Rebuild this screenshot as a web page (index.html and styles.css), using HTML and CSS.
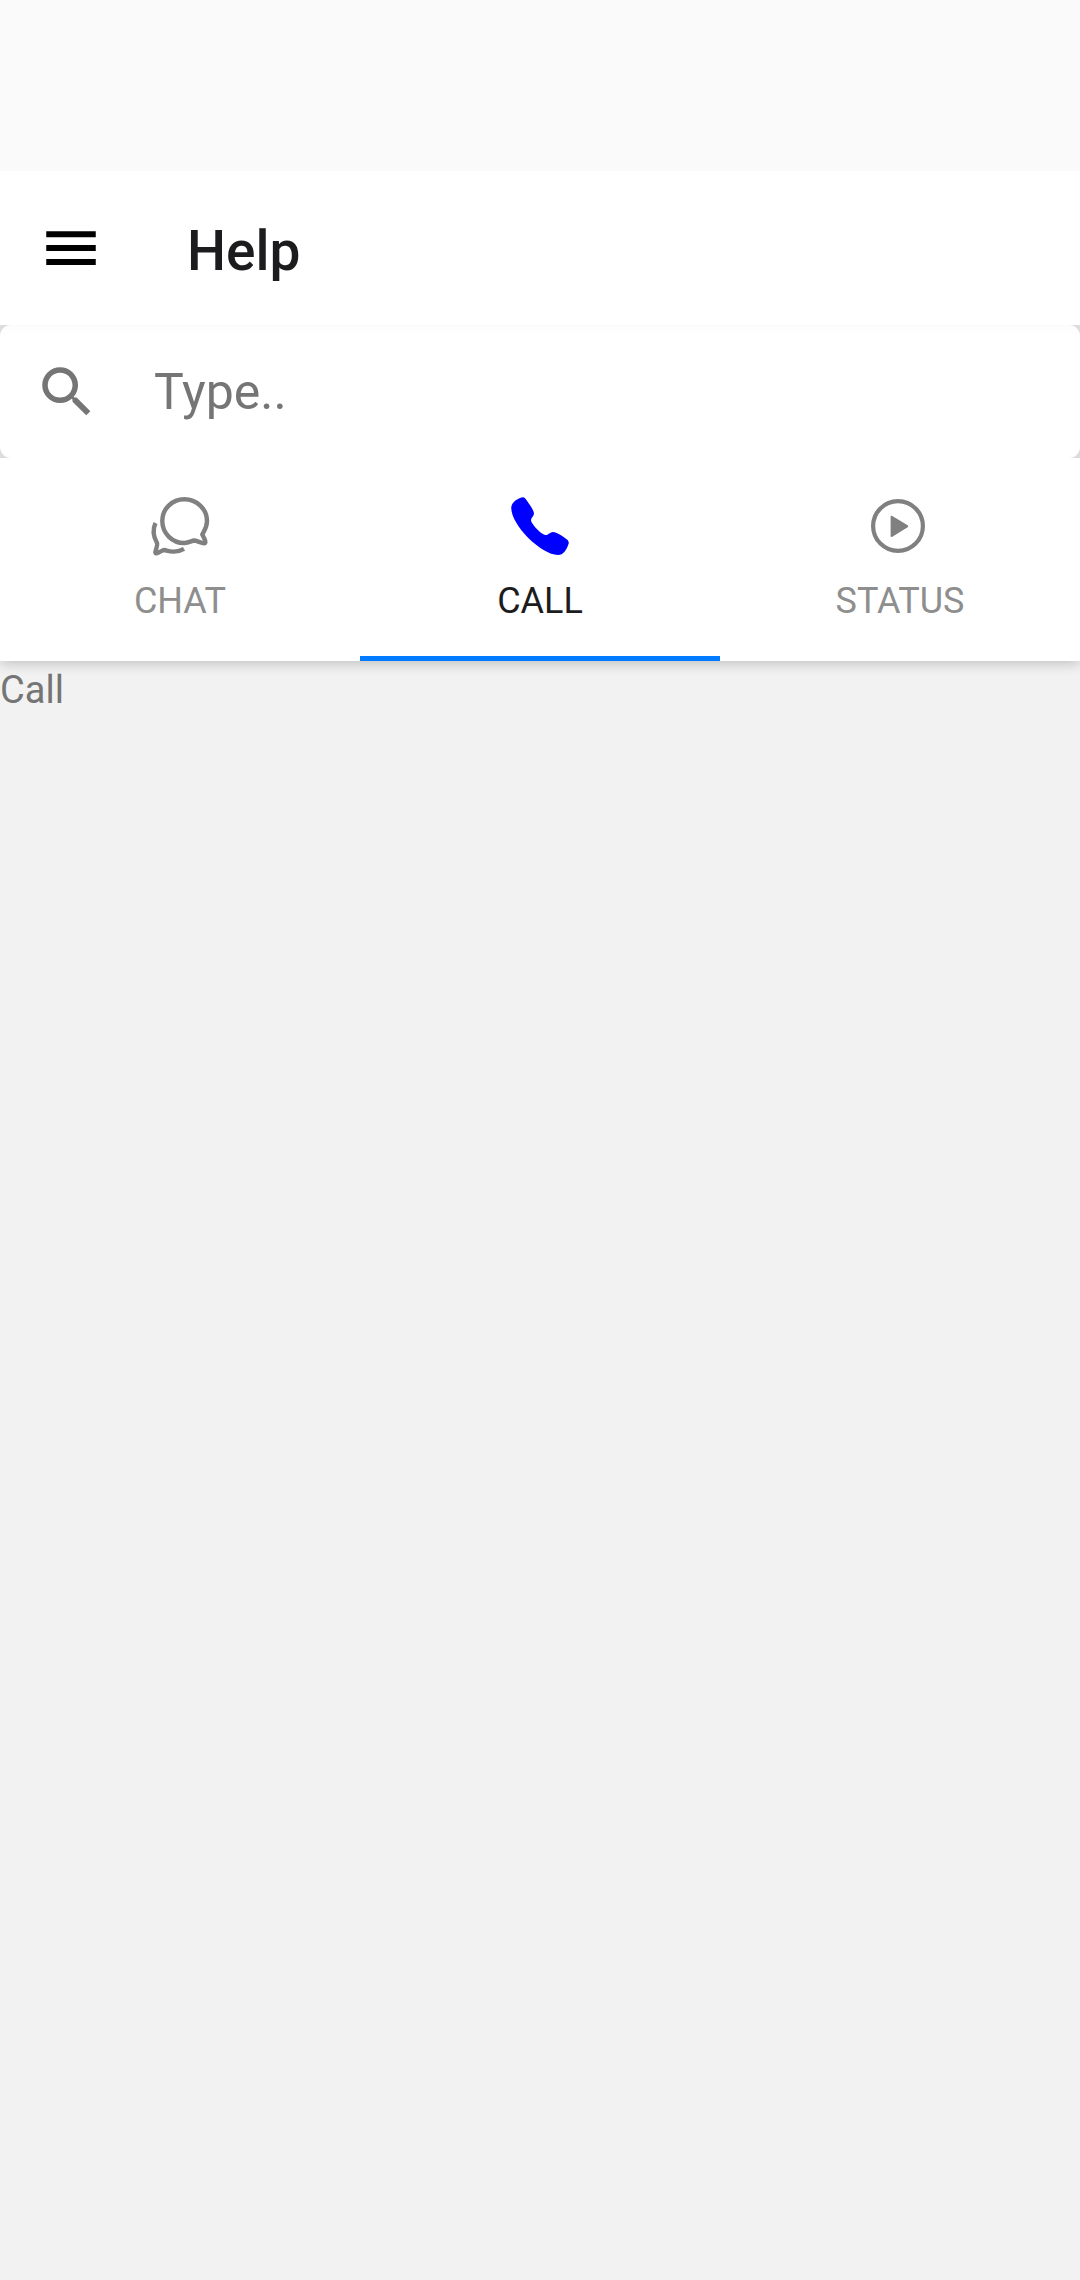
FILE: index.html
```html
<!DOCTYPE html>
<html lang="en">
<head>
<meta charset="utf-8">
<meta name="viewport" content="width=device-width, initial-scale=1">
<title>Help</title>
<link rel="stylesheet" href="styles.css">
</head>
<body>
<div class="status-bar"></div>
<header class="toolbar">
  <button class="icon-button" type="button" aria-label="Open menu">
    <svg class="icon" viewBox="0 0 24 24" fill="#000"><path d="M3 18.200h18v-2.200H3v2.200zm0-5.100h18v-2.200H3v2.200zm0-7.200v2.200h18V5.900H3z"/></svg>
  </button>
  <h1 class="title">Help</h1>
</header>
<form class="search-wrap" role="search">
  <div class="search">
    <svg class="icon" viewBox="0 0 24 24" fill="#757575" aria-hidden="true"><path d="M15.5 14h-.79l-.28-.27A6.471 6.471 0 0 0 16 9.500 6.500 6.500 0 1 0 9.500 16c1.610 0 3.090-.59 4.230-1.570l.27.28v.79l5 4.990L20.490 19l-4.990-5zm-6 0C7.010 14 5 11.990 5 9.500S7.010 5 9.500 5 14 7.010 14 9.500 11.990 14 9.500 14z"/></svg>
    <input class="search-input" type="search" placeholder="Type.." aria-label="Search">
  </div>
</form>
<nav class="tabs" role="tablist">
  <button class="tab" type="button" role="tab" aria-selected="false">
    <svg class="icon" viewBox="0 0 66 66" fill="none" stroke="#808080" stroke-width="4.400" stroke-linecap="round" stroke-linejoin="round"><path d="M55.300 41.500C57.200 37.700 60 34.500 60 28C60 15.800 49.600 6.300 37.300 6.300S15.300 15.800 15.300 28S25 50 37.300 50C41.500 50 44.500 48 47 47.500C49.500 47.500 54 50 57 50.300C58.500 50.400 58.600 49.400 58 47Z"/><path stroke-linecap="butt" d="M8.500 30C5 37.500 6.300 43.500 10 50C11 52 8.300 57.500 8.300 59.500C8.500 60.700 9.200 60.500 10.500 60C13 59 15.500 57 17.500 57C20 57.500 22.500 58.800 27 58.600C31 58.500 34 57.500 37 55.800"/></svg>
    <span class="label">CHAT</span>
  </button>
  <button class="tab tab-active" type="button" role="tab" aria-selected="true">
    <svg class="icon" viewBox="0 0 66 66" fill="#00f"><path d="M4.300 14C4.800 9 11 5 15.500 4.200C17.500 4 19 6.200 20.500 8.500C23 12 27 18 27 20.500C26.800 23.500 23.800 25 24 27.500C25 32 34.500 41.500 38.500 42C41.500 42.200 43 39 46 39C49.500 39 57 44 60 46.500C61.800 48.200 62 49.500 61.500 51C59.500 57 56.500 62 51 62C34 62 3 31 4.300 14Z"/></svg>
    <span class="label">CALL</span>
  </button>
  <button class="tab" type="button" role="tab" aria-selected="false">
    <svg class="icon" viewBox="0 0 66 66"><circle cx="31" cy="33" r="24.900" fill="none" stroke="#808080" stroke-width="4.200"/><path fill="#808080" d="M23.600 23.700C23.600 22.700 24.500 22.400 25.300 22.900L40.700 32.300Q42 33.200 40.700 34.200L25.300 43.700C24.500 44.200 23.600 43.900 23.600 43Z"/></svg>
    <span class="label">STATUS</span>
  </button>
</nav>
<main class="content" role="tabpanel"><p class="text">Call</p></main>
</body>
</html>
```
FILE: styles.css
```css
* { box-sizing: border-box; }

body {
  margin: 0;
  min-height: 100vh;
  display: flex;
  flex-direction: column;
  background: #f2f2f2;
  font-family: Roboto, sans-serif;
}

button {
  border: 0;
  padding: 0;
  background: none;
  font: inherit;
}

.icon {
  display: block;
  flex: none;
  width: 66px;
  height: 66px;
}

.status-bar {
  height: 171px;
  background: #fafafa;
}

.toolbar {
  display: flex;
  align-items: center;
  gap: 83px;
  height: 154px;
  padding: 0 38px;
  background: #fff;
}

.title {
  margin: 0;
  padding-top: 6px;
  font-size: 55px;
  line-height: 64px;
  font-weight: 500;
  color: #1c1c1e;
}

.search-wrap {
  margin: 0;
  background: #dcdcdc;
}

.search {
  display: flex;
  align-items: center;
  gap: 54px;
  height: 133px;
  padding: 0 34px;
  border-radius: 11px;
  background: linear-gradient(#fcfcfc, #fff 10px);
}

.search-input {
  flex: 1;
  min-width: 0;
  border: 0;
  padding: 0;
  outline: 0;
  background: none;
  font: 50px/60px Roboto, sans-serif;
  color: #212121;
}

.search-input::placeholder {
  color: #757575;
  opacity: 1;
}

.tabs {
  display: grid;
  grid-template-columns: repeat(3, 1fr);
  background: #fff;
  box-shadow: 0 3px 12px rgba(0, 0, 0, 0.2);
  clip-path: inset(0 0 -30px 0);
}

.tab {
  display: flex;
  flex-direction: column;
  align-items: center;
  gap: 18px;
  padding: 35px 0 31px;
  border-bottom: 5px solid transparent;
  color: #8e8e8e;
}

.tab-active {
  border-bottom-color: #007aff;
  color: #1c1c1e;
}

.label {
  font-size: 36px;
  line-height: 48px;
}

.content {
  flex: 1;
}

.text {
  margin: 0;
  padding-top: 6px;
  font-size: 38px;
  line-height: 46px;
  color: #757575;
}
```
